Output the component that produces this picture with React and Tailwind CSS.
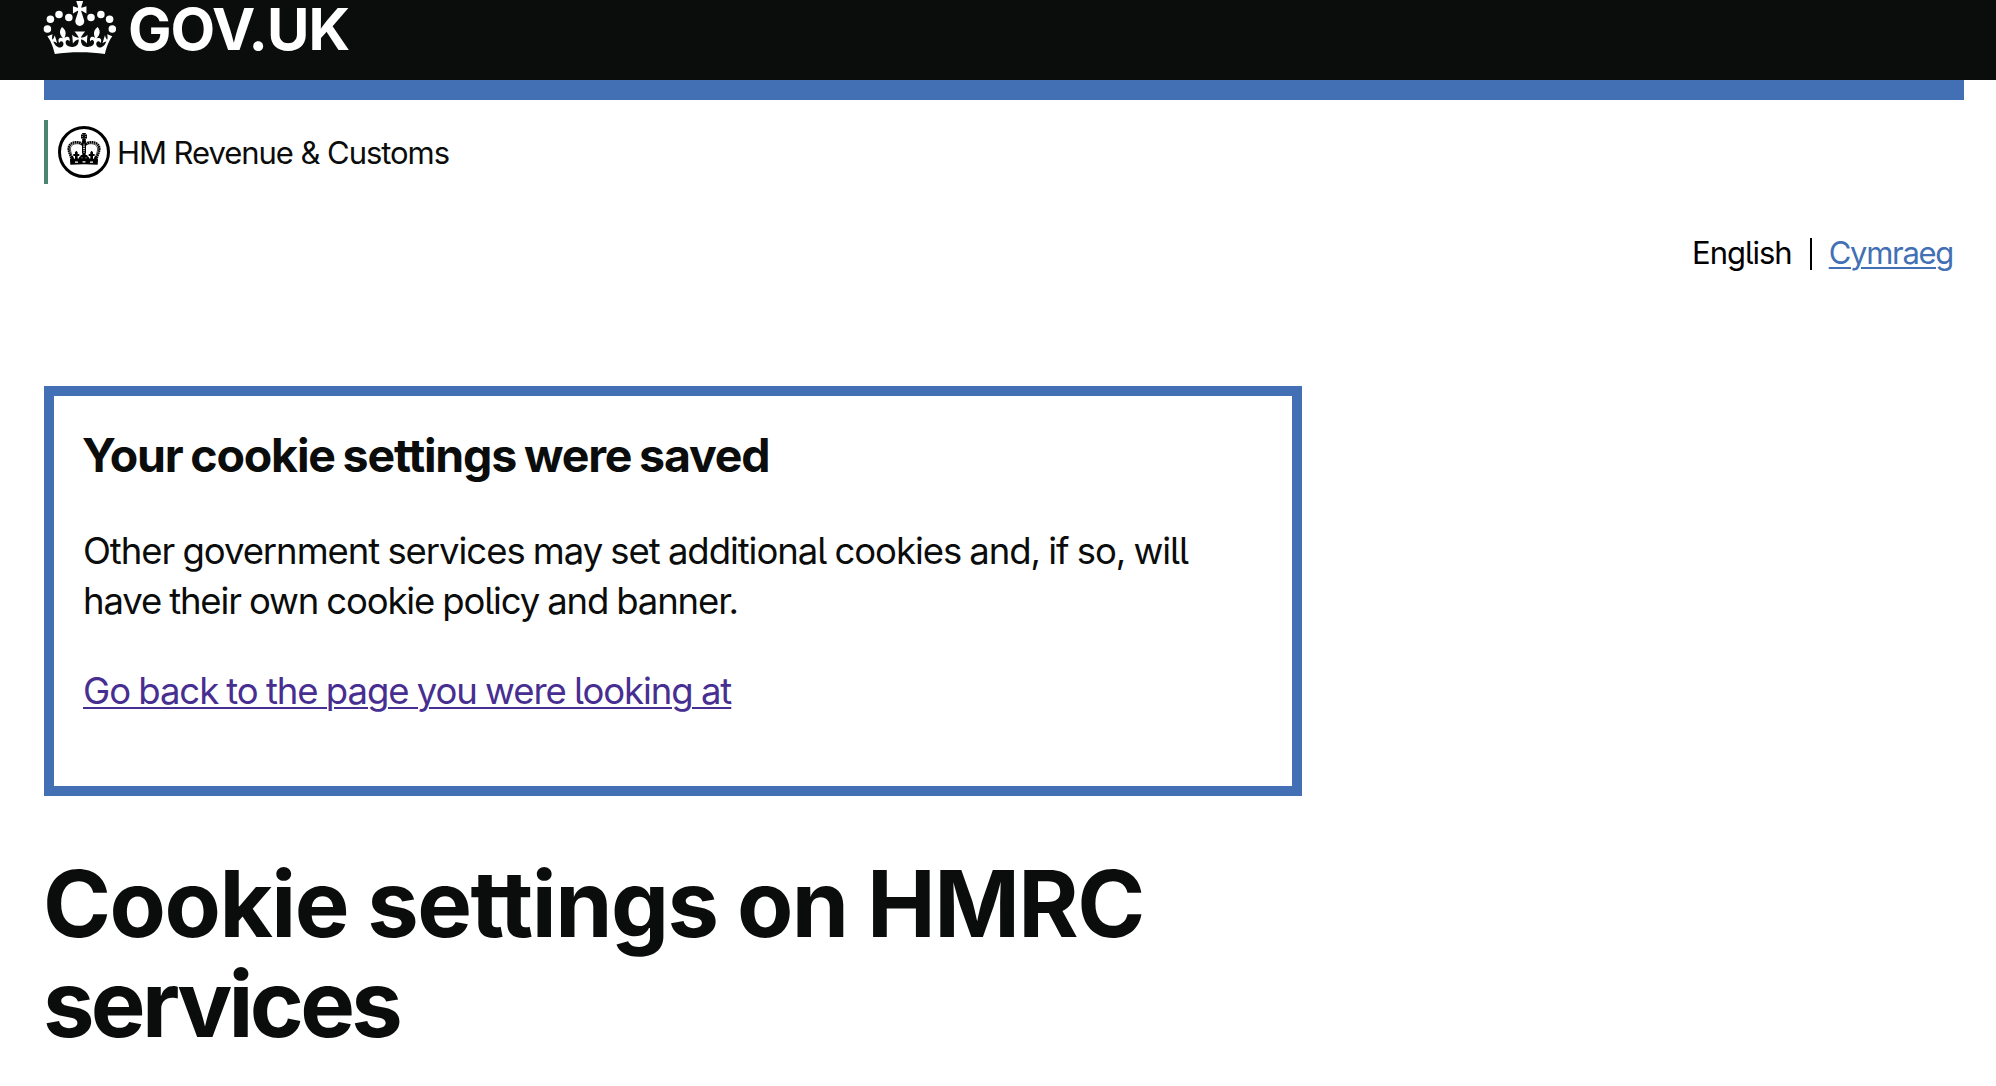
function GovCrown() {
  return (
    <svg className="h-[56px] w-[74px] shrink-0" viewBox="43 0 74 56" fill="#fff" aria-hidden="true">
      <circle cx="47.4" cy="29" r="3.75" />
      <circle cx="50.4" cy="19.3" r="3.75" />
      <circle cx="59" cy="14.4" r="3.75" />
      <circle cx="68.8" cy="17.4" r="3.75" />
      <circle cx="112.3" cy="29" r="3.75" />
      <circle cx="109.6" cy="19.3" r="3.75" />
      <circle cx="100.9" cy="14.4" r="3.75" />
      <circle cx="91" cy="17.4" r="3.75" />
      <path
        transform="translate(47.1 1) scale(1.03 1.06)"
        d="M33.1,9.8c.2-.1.3-.3.5-.5l4.6,2.4v-6.8l-4.6,1.5c-.1-.2-.3-.3-.5-.5l1.9-5.9h-6.7l1.9,5.9c-.2.1-.3.3-.5.5l-4.6-1.5v6.8l4.6-2.4c.1.2.3.3.5.5l-2.6,8c-.9,2.8,1.2,5.7,4.1,5.7h0c3,0,5.1-2.9,4.1-5.7l-2.6-8Z"
      />
      <path
        transform="translate(47.4 -7.2) scale(1.02)"
        d="M37,37.9s-3.4,3.8-4.1,6.1c2.2,0,4.2-.5,6.4-2.8l-.7,8.5c-2-2.8-4.4-4.1-5.7-3.8.1,3.1.5,6.7,5.8,7.2,3.7.3,6.7-1.5,7-3.8.4-2.6-2-4.3-3.7-1.6-1.4-4.5,2.4-6.1,4.9-3.2-1.9-4.5-1.8-7.7,2.4-10.9,3,4,2.6,7.3-1.2,11.1,2.4-1.3,6.2,0,4,4.6-1.2-2.8-3.7-2.2-4.2.2-.3,1.7.7,3.7,3,4.2,1.9.3,4.7-.9,7-5.9-1.3,0-2.4.7-3.9,1.7l2.4-8c.6,2.3,1.4,3.7,2.2,4.5.6-1.6.5-2.8,0-5.3l5,1.8c-2.6,3.6-5.2,8.7-7.3,17.5-7.4-1.1-15.7-1.7-24.5-1.7h0c-8.8,0-17.1.6-24.5,1.7-2.1-8.9-4.7-13.9-7.3-17.5l5-1.8c-.5,2.5-.6,3.7,0,5.3.8-.8,1.6-2.3,2.2-4.5l2.4,8c-1.5-1-2.6-1.7-3.9-1.7,2.3,5,5.2,6.2,7,5.9,2.3-.4,3.3-2.4,3-4.2-.5-2.4-3-3.1-4.2-.2-2.2-4.6,1.6-6,4-4.6-3.7-3.7-4.2-7.1-1.2-11.1,4.2,3.2,4.3,6.4,2.4,10.9,2.5-2.8,6.3-1.3,4.9,3.2-1.8-2.7-4.1-1-3.7,1.6.3,2.3,3.3,4.1,7,3.8,5.4-.5,5.7-4.2,5.8-7.2-1.3-.2-3.7,1-5.7,3.8l-.7-8.5c2.2,2.3,4.2,2.7,6.4,2.8-.7-2.3-4.1-6.1-4.1-6.1h10.6Z"
      />
    </svg>
  );
}

function CrestHalf() {
  return (
    <g>
      <path d="M97 79C88 69 62 70 57 86C53 99 62 108 65 126" fill="none" stroke="#000" strokeWidth="7.5" strokeDasharray="5 1.4" />
      <path d="M97 83C89 74 67 75 62 88C59 99 66 108 69 124" fill="none" stroke="#000" strokeWidth="2" />
      <path d="M79 98l4 5v5h5v6h-5v12h-8v-12h-5v-6h5v-5z" />
      <path d="M64 113c6 0 8 4 8 12h-8zM86 124c0-7 4-10 9-10v10z" />
    </g>
  );
}

function HmrcCrest() {
  return (
    <svg className="h-[52px] w-[52px] shrink-0" viewBox="24 24 156 156" aria-hidden="true">
      <circle cx="102" cy="102" r="73.5" fill="none" stroke="#000" strokeWidth="9" />
      <CrestHalf />
      <g transform="translate(204 0) scale(-1 1)">
        <CrestHalf />
      </g>
      <path d="M96 45h12l-2 6 5-2v13l-5-2 2 6h-12l2-6-5 2v-13l5 2z" />
      <path d="M102 49v3M102 59v3M95 55.500h4M105 55.500h4" stroke="#fff" strokeWidth="1.5" />
      <circle cx="102" cy="71" r="6.5" />
      <path d="M97.500 77h9v28h-9z" fill="#fff" stroke="#000" strokeWidth="3" />
      <path d="M102 79v26" stroke="#000" strokeWidth="5" strokeDasharray="4.5 2" />
      <path d="M97 105h10v6h5v7h-5v7h-10v-7h-5v-7h5z" />
      <path d="M61 123q41-4 82 0l1 3-1 14q-41-3-82 0l-1-14z" />
      <path d="M75 132.500h9M97.500 131.500h9M120 132.500h9" stroke="#fff" strokeWidth="3.500" />
    </svg>
  );
}

export default function App() {
  return (
    <div className="h-[1086px] overflow-hidden bg-white text-[#0b0c0c] [font-family:Inter,'Liberation_Sans',sans-serif] [font-feature-settings:'cv05']">
      <header className="h-20 bg-[#0b0c0c] pl-[43px]">
        <a className="flex w-fit items-start text-white">
          <GovCrown />
          <span className="ml-[11px] text-[58px] leading-[58px] font-bold tracking-[-1px]">GOV.UK</span>
        </a>
      </header>

      <div className="mr-8 ml-11">
        <div className="h-5 bg-[#4370b4]" />

        <div className="mt-5 flex h-16 items-center border-l-4 border-[#4b8570] pl-[10px]">
          <HmrcCrest />
          <span className="mt-[2px] ml-[7px] text-[31px] leading-[30px] tracking-[-1.05px] whitespace-nowrap">HM Revenue &amp; Customs</span>
        </div>

        <nav className="mt-[49px] mr-[11px] flex h-10 items-center justify-end text-[31px] leading-10">
          <span className="tracking-[-1px] text-black">English</span>
          <span className="mt-[2px] ml-[18px] h-8 w-[2px] bg-black" />
          <a className="ml-[17px] tracking-[-1.3px] text-[#4370b4] underline decoration-2 underline-offset-[3px]">Cymraeg</a>
        </nav>

        <main className="mt-[113px]">
          <section className="h-[410px] w-[1258px] border-[10px] border-[#4370b4] pt-[34px] pl-[29px]">
            <h2 className="-ml-px text-[46.5px] leading-[50px] font-bold tracking-[-1.2px] whitespace-nowrap [word-spacing:-2px]">Your cookie settings were saved</h2>
            <p className="mt-[46px] text-[36.5px] leading-[50px] whitespace-nowrap [word-spacing:-1px]">
              <span className="block tracking-[-1.05px]">Other government services may set additional cookies and, if so, will</span>
              <span className="block tracking-[-1.15px]">have their own cookie policy and banner.</span>
            </p>
            <p className="mt-10 text-[36.5px] leading-[50px] whitespace-nowrap [word-spacing:-1px]">
              <a className="tracking-[-1.05px] text-[#472e91] underline decoration-2 underline-offset-[3px]">Go back to the page you were looking at</a>
            </p>
          </section>

          <h1 className="mt-[58px] -ml-px text-[92px] leading-[100px] font-bold whitespace-nowrap">
            <span className="block tracking-[-1.5px] [word-spacing:-1px]">Cookie settings on HMRC</span>
            <span className="block tracking-[-3.7px]">services</span>
          </h1>
        </main>
      </div>
    </div>
  );
}
